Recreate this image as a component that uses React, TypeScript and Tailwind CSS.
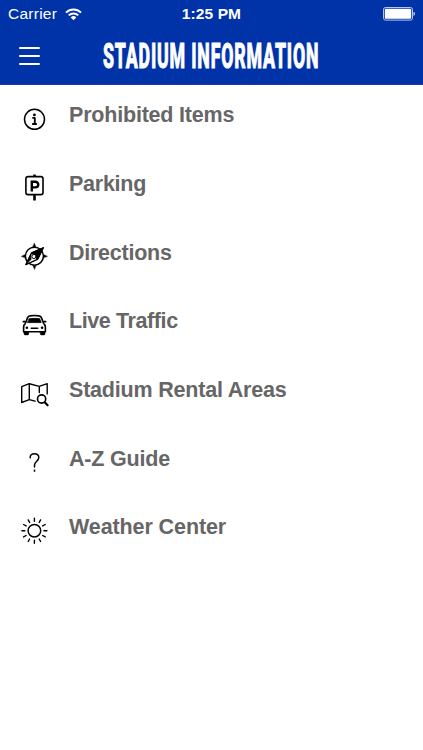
import type { ReactNode } from "react";

type MenuItem = {
  label: string;
  tracking: string;
  icon: ReactNode;
};

const items: MenuItem[] = [
  {
    label: "Prohibited Items",
    tracking: "tracking-[-0.2px]",
    icon: (
      <>
        <circle cx="20.5" cy="20.3" r="10" strokeWidth="1.5" />
        <circle cx="20.4" cy="15.9" r="1.4" fill="currentColor" stroke="none" />
        <path d="M18.3 18.9h2.5v6M18.2 25h4.6" strokeWidth="1.8" strokeLinecap="butt" />
      </>
    ),
  },
  {
    label: "Parking",
    tracking: "tracking-[-0.25px]",
    icon: (
      <g transform="translate(0 -3)">
        <path d="M20.5 9.5v2M20.5 30v5.4" strokeWidth="2.6" strokeLinecap="butt" />
        <rect x="11.9" y="11.6" width="17.1" height="18" rx="2.2" strokeWidth="1.6" />
        <path
          d="M17.8 26.4V16.7h3.6a2.8 2.8 0 0 1 0 5.7h-3.6"
          strokeWidth="2.4"
          strokeLinecap="butt"
          strokeLinejoin="miter"
        />
      </g>
    ),
  },
  {
    label: "Directions",
    tracking: "tracking-[-0.25px]",
    icon: (
      <>
        <circle cx="20.4" cy="20.2" r="9" strokeWidth="1.5" />
        <path
          d="M20.4 7.3 22 11h-3.2zM20.4 33.2 18.8 29.5H22zM7.5 20.2 11.2 18.6v3.2zM33.3 20.2 29.6 18.6v3.2z"
          fill="currentColor"
          strokeWidth=".4"
        />
        <path d="M29.2 11.8 17.6 16.8 11.9 28.6 23.4 23.4z" fill="white" strokeWidth="1.3" />
        <path d="M29.2 11.8 17.6 16.8 20.4 19.9 23.4 23.4z" fill="currentColor" />
        <path d="M16.6 18.6 11.9 28.6 17 23.4z" fill="currentColor" strokeWidth=".6" />
        <circle cx="20" cy="20.5" r="2.1" fill="white" strokeWidth="1" />
      </>
    ),
  },
  {
    label: "Live Traffic",
    tracking: "tracking-[-0.4px]",
    icon: (
      <>
        <path
          d="M11.4 18.3 13.6 12.6Q14.2 11.1 16 10.9Q20.5 10.2 25 10.9Q26.8 11.1 27.4 12.6L29.6 18.3Q31.4 19.7 31.4 22.4V26.7H9.6V22.4Q9.6 19.7 11.4 18.3z"
          strokeWidth="1.6"
        />
        <path d="M15.3 13.7Q20.5 12.9 25.7 13.7L27.2 17.6H13.8z" fill="currentColor" strokeWidth=".8" />
        <path
          d="M10 26.8h4.7v2.1q0 1-1 1h-2.7q-1 0-1-1zM26.3 26.8H31v2.1q0 1-1 1h-2.7q-1 0-1-1z"
          fill="currentColor"
          strokeWidth=".5"
        />
        <path d="M9.4 16.6h1.6M30 16.6h1.6" strokeWidth="1.8" />
        <path d="M17.2 23.3h6.6" strokeWidth="1.4" />
        <circle cx="12.9" cy="22.8" r="1.3" fill="currentColor" stroke="none" />
        <circle cx="28.1" cy="22.8" r="1.3" fill="currentColor" stroke="none" />
      </>
    ),
  },
  {
    label: "Stadium Rental Areas",
    tracking: "tracking-[-0.2px]",
    icon: (
      <>
        <path
          d="M21 27.2 15.3 25.6 7.7 28.5V12.6L15.3 9.7 25.3 12.4 33.2 9.7V19.9M15.3 9.7v15.9M25.3 12.4v6.2"
          strokeWidth="1.4"
        />
        <circle cx="27.6" cy="25" r="4.1" strokeWidth="1.6" />
        <path d="M30.8 28.3 33.6 31.3" strokeWidth="2.2" />
      </>
    ),
  },
  {
    label: "A-Z Guide",
    tracking: "tracking-[-0.18px]",
    icon: (
      <g transform="translate(0 1)">
        <path
          d="M16.2 14.8C16 12.1 17.7 10.7 20.3 10.7S24.8 12.3 24.8 14.6C24.8 18 20.5 18.5 20.5 22.1V24"
          strokeWidth="1.5"
        />
        <path d="M20.5 26.6v2.1" strokeWidth="1.6" strokeLinecap="butt" />
      </g>
    ),
  },
  {
    label: "Weather Center",
    tracking: "tracking-[-0.1px]",
    icon: (
      <>
        <circle cx="20.4" cy="19.7" r="6.3" strokeWidth="1.5" />
        <path
          d="M20.4 7.2v3M20.4 29.2v3M7.9 19.7h3M29.9 19.7h3M14.2 8.9l1.4 2.5M25.2 28l1.4 2.5M9.6 13.5l2.5 1.4M28.7 24.5l2.5 1.4M9.6 25.9l2.5-1.4M28.7 14.9l2.5-1.4M14.2 30.5l1.4-2.5M25.2 11.4l1.4-2.5"
          strokeWidth="1.4"
        />
      </>
    ),
  },
];

function StatusBar() {
  return (
    <div className="grid h-7 grid-cols-3 items-center pr-2 pl-2 text-[15.5px] leading-none">
      <div className="flex items-center gap-2">
        <span className="tracking-[0.25px]">Carrier</span>
        <svg width="17" height="13" viewBox="0 0 17 13" fill="none" stroke="currentColor" strokeWidth="2">
          <path d="M1 4.6a10.6 10.6 0 0 1 15 0M3.7 7.4a6.8 6.8 0 0 1 9.6 0" />
          <path d="M5.7 9.4a4 4 0 0 1 5.6 0l-2.8 2.9z" fill="currentColor" stroke="none" />
        </svg>
      </div>
      <span className="text-center font-bold tracking-[0.1px]">1:25 PM</span>
      <svg className="justify-self-end" width="32" height="14" viewBox="0 0 32 14">
        <rect x=".5" y=".5" width="29" height="12.6" rx="2" fill="none" stroke="#b6c7ee" />
        <rect x="1.8" y="1.8" width="26.4" height="10" rx="1" fill="white" />
        <path d="M30.5 4.7q1.5.6 1.5 2.1t-1.5 2.1z" fill="#d4def5" />
      </svg>
    </div>
  );
}

function Header() {
  return (
    <header className="h-[85px] border-b border-[#1a3c95] bg-[#0032a8] text-white">
      <StatusBar />
      <div className="flex h-14 items-center">
        <button aria-label="Open menu" className="ml-[19px] flex w-[21px] flex-col gap-[6px]">
          <span className="h-[2px] rounded-full bg-white" />
          <span className="h-[2px] rounded-full bg-white" />
          <span className="h-[2px] rounded-full bg-white" />
        </button>
        <h1 className="ml-[59px]">
          <svg
            width="228"
            height="46"
            viewBox="0 0 228 46"
            fill="white"
            stroke="white"
            strokeWidth="1"
            className="block overflow-visible"
          >
            <text
              x="8"
              y="35"
              transform="scale(0.5 1)"
              textLength="431"
              lengthAdjust="spacing"
              className="font-['Roboto'] text-[35.5px] font-extrabold"
            >
              STADIUM INFORMATION
            </text>
          </svg>
        </h1>
      </div>
    </header>
  );
}

export default function App() {
  return (
    <div className="min-h-[750px] w-full bg-white font-['Liberation_Sans',Arial,sans-serif]">
      <Header />
      <ul className="pt-[14px]">
        {items.map((item) => (
          <li key={item.label} className="flex h-[68.67px] items-start pl-[14px]">
            <svg
              width="40"
              height="40"
              viewBox="0 0 40 40"
              fill="none"
              stroke="currentColor"
              strokeLinecap="round"
              strokeLinejoin="round"
              className="shrink-0 text-black"
            >
              {item.icon}
            </svg>
            <span
              className={`ml-[15px] pt-[4.4px] text-[21.5px] leading-6 font-bold whitespace-nowrap text-[#666] ${item.tracking}`}
            >
              {item.label}
            </span>
          </li>
        ))}
      </ul>
    </div>
  );
}
